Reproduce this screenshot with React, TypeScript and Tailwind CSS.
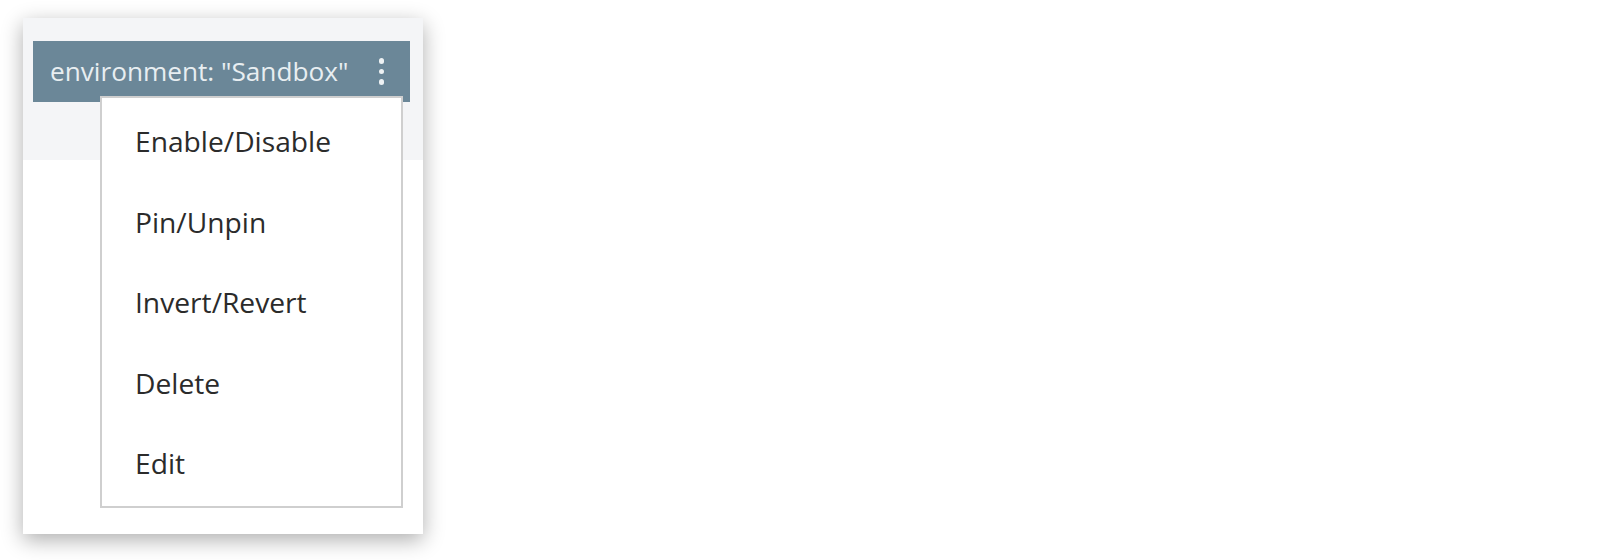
const items = ['Enable/Disable', 'Pin/Unpin', 'Invert/Revert', 'Delete', 'Edit'];

export default function App() {
  return (
    <div className="min-h-[560px] w-full bg-white pl-[23px] pt-[18px]" style={{ fontFamily: '"Open Sans", "Liberation Sans", sans-serif' }}>
      {/* Card */}
      <div className="relative w-[400px] h-[516px] bg-white shadow-[0_6px_20px_rgba(0,0,0,0.32)]">
        {/* Header area */}
        <div className="h-[142px] bg-[#f4f5f7] pl-[10px] pt-[23px]">
          <div className="flex h-[61px] w-[377px] items-center justify-between bg-[#6b8798] pl-[17px] pr-[26px]">
            <span className="text-[26.2px] leading-none text-[#e8eef1] whitespace-nowrap">environment: "Sandbox"</span>
            <span className="flex flex-col items-center gap-[5px]">
              <span className="block h-[5.5px] w-[5.5px] rounded-full bg-[#eef2f4]" />
              <span className="block h-[5.5px] w-[5.5px] rounded-full bg-[#eef2f4]" />
              <span className="block h-[5.5px] w-[5.5px] rounded-full bg-[#eef2f4]" />
            </span>
          </div>
        </div>

        {/* Dropdown menu */}
        <div className="absolute left-[77px] top-[78px] w-[303px] border-2 border-[#cfcfcf] bg-white pt-[3px] pb-[2px]">
          {items.map((item) => (
            <div key={item} className="h-[80.6px] pl-[33px] text-[28.2px] leading-[80.6px] text-[#2b2b2b]">
              {item}
            </div>
          ))}
        </div>
      </div>
    </div>
  );
}
